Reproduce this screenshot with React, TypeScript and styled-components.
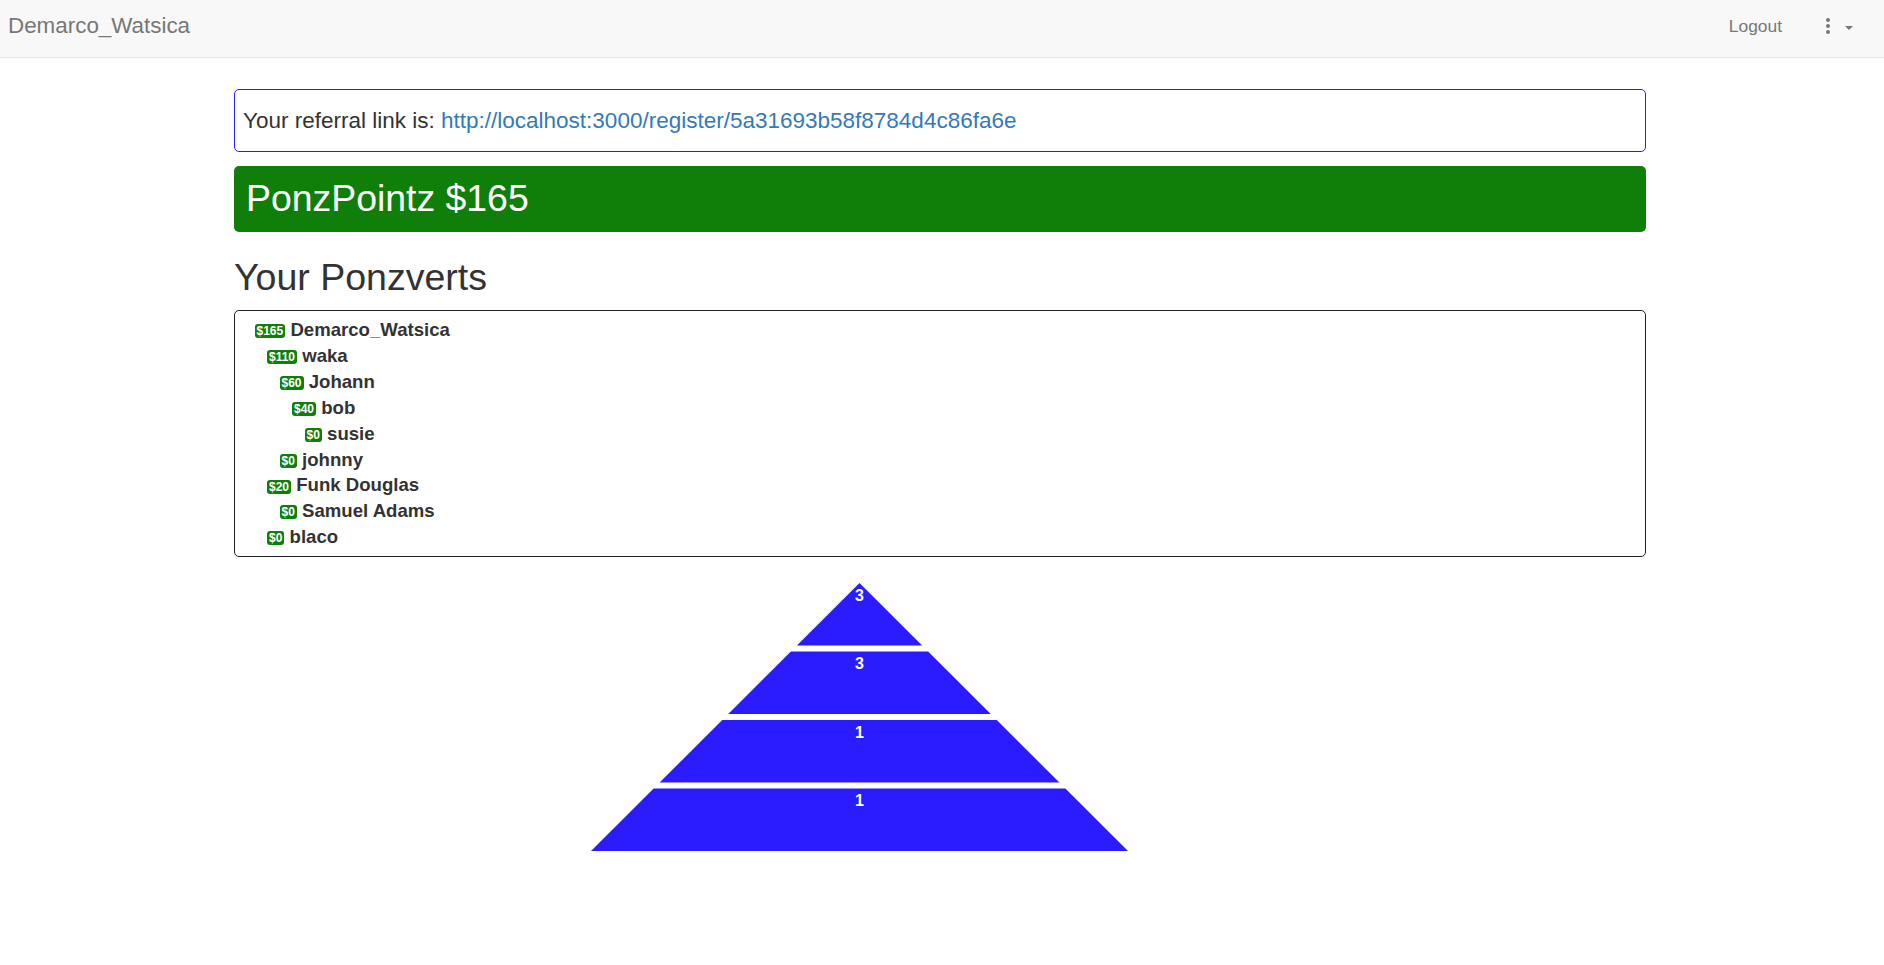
import React from "react";
import styled, { createGlobalStyle } from "styled-components";

const GlobalStyle = createGlobalStyle`
  html, body { margin: 0; padding: 0; background: #fff; }
  body {
    font-family: "Liberation Sans", Arial, Helvetica, sans-serif;
    color: #333;
  }
  * { box-sizing: border-box; }
`;

const GREEN = "#0f7f0a";
const BLUE = "#2b1cff";

const NavBar = styled.nav`
  height: 58px;
  background: #f8f8f8;
  border-bottom: 1px solid #e7e7e7;
  display: flex;
  align-items: center;
  justify-content: space-between;
  padding: 0 31px 6px 8px;
`;

const Brand = styled.a`
  font-size: 22.4px;
  line-height: 22px;
  color: #777;
  text-decoration: none;
`;

const NavRight = styled.div`
  display: flex;
  align-items: center;
`;

const NavLink = styled.a`
  font-size: 17.4px;
  line-height: 20px;
  color: #777;
  text-decoration: none;
  margin-right: 44px;
`;

const MenuButton = styled.button`
  display: flex;
  align-items: center;
  gap: 15px;
  background: none;
  border: 0;
  padding: 0;
  margin-top: 1px;
  cursor: pointer;
`;

const Caret = styled.span`
  width: 0;
  height: 0;
  border-top: 4.5px solid #777;
  border-left: 4.5px solid transparent;
  border-right: 4.5px solid transparent;
  margin-top: 4px;
`;

const Main = styled.main`
  width: 1412px;
  margin: 31px 0 0 234px;
`;

const ReferralBox = styled.div`
  border: 1px solid ${BLUE};
  border-radius: 5px;
  padding: 18.5px 8px;
  font-size: 22.5px;
  line-height: 24.2px;
  color: #333;
`;

const Link = styled.a`
  color: #337ab7;
  text-decoration: none;
`;

const PointsBar = styled.div`
  margin-top: 14px;
  background: ${GREEN};
  border-radius: 5px;
  color: #fff;
  font-size: 37.4px;
  line-height: 39.6px;
  padding: 13px 12px 13.4px;
`;

const Heading = styled.h2`
  margin: 26px 0 12.4px;
  font-size: 37.5px;
  line-height: 39.6px;
  font-weight: 400;
  color: #333;
`;

const TreeBox = styled.div`
  border: 1px solid #222;
  border-radius: 5px;
  padding: 6px 0 6px 19.5px;
`;

const TreeRow = styled.div<{ $level: number }>`
  padding-left: ${(p) => p.$level * 12.5}px;
  font-size: 18.6px;
  line-height: 25.875px;
  font-weight: 700;
  color: #333;
  white-space: nowrap;
`;

const Badge = styled.span`
  display: inline-block;
  vertical-align: middle;
  background: ${GREEN};
  color: #fff;
  font-size: 12px;
  line-height: 14px;
  font-weight: 700;
  padding: 0 2px;
  border-radius: 3px;
`;

const ChartArea = styled.div`
  width: 1250px;
  margin-top: 26px;
  display: flex;
  justify-content: center;
`;

const treeData: { level: number; amount: number; name: string }[] = [
  { level: 0, amount: 165, name: "Demarco_Watsica" },
  { level: 1, amount: 110, name: "waka" },
  { level: 2, amount: 60, name: "Johann" },
  { level: 3, amount: 40, name: "bob" },
  { level: 4, amount: 0, name: "susie" },
  { level: 2, amount: 0, name: "johnny" },
  { level: 1, amount: 20, name: "Funk Douglas" },
  { level: 2, amount: 0, name: "Samuel Adams" },
  { level: 1, amount: 0, name: "blaco" },
];

const pyramidCounts = [3, 3, 1, 1];

function Kebab() {
  return (
    <svg width="4" height="16" viewBox="0 0 4 16" aria-hidden="true">
      <circle cx="2" cy="2" r="2" fill="#777" />
      <circle cx="2" cy="8" r="2" fill="#777" />
      <circle cx="2" cy="14" r="2" fill="#777" />
    </svg>
  );
}

function Pyramid() {
  const W = 537;
  const H = 268;
  const cx = W / 2;
  const k = cx / H;
  const gap = 6;
  const n = pyramidCounts.length;
  const h = (H - gap * (n - 1)) / n;
  return (
    <svg width={W} height={H} viewBox={`0 0 ${W} ${H}`}>
      {pyramidCounts.map((c, i) => {
        const top = i * (h + gap);
        const bot = top + h;
        const tw = k * top;
        const bw = k * bot;
        const pts = `${cx - tw},${top} ${cx + tw},${top} ${cx + bw},${bot} ${cx - bw},${bot}`;
        return (
          <g key={i}>
            <polygon points={pts} fill={BLUE} />
            <text
              x={cx}
              y={top + 17.5}
              textAnchor="middle"
              fill="#fff"
              fontFamily='"Liberation Sans", Arial, sans-serif'
              fontWeight={700}
              fontSize={16}
            >
              {c}
            </text>
          </g>
        );
      })}
    </svg>
  );
}

export default function App() {
  return (
    <>
      <GlobalStyle />
      <NavBar>
        <Brand href="#">Demarco_Watsica</Brand>
        <NavRight>
          <NavLink href="#">Logout</NavLink>
          <MenuButton aria-label="menu">
            <Kebab />
            <Caret />
          </MenuButton>
        </NavRight>
      </NavBar>
      <Main>
        <ReferralBox>
          Your referral link is:{" "}
          <Link href="#">http://localhost:3000/register/5a31693b58f8784d4c86fa6e</Link>
        </ReferralBox>
        <PointsBar>PonzPointz $165</PointsBar>
        <Heading>Your Ponzverts</Heading>
        <TreeBox>
          {treeData.map((r, i) => (
            <TreeRow key={i} $level={r.level}>
              <Badge>${r.amount}</Badge> {r.name}
            </TreeRow>
          ))}
        </TreeBox>
        <ChartArea>
          <Pyramid />
        </ChartArea>
      </Main>
    </>
  );
}
